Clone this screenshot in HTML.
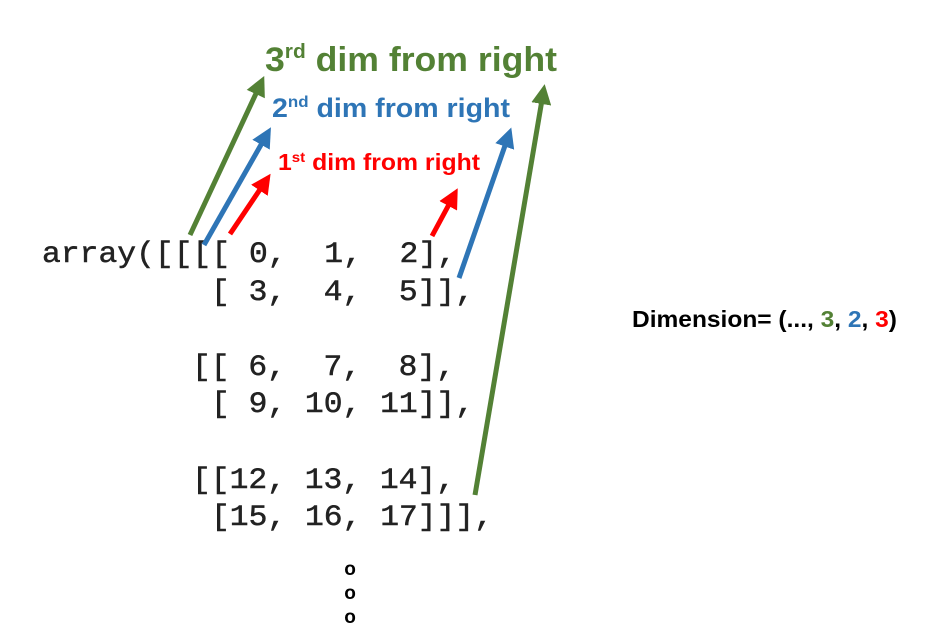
<!DOCTYPE html>
<html><head><meta charset="utf-8"><style>
html,body{margin:0;padding:0;background:#fff;width:925px;height:644px;overflow:hidden}
.m text{white-space:pre}
</style></head><body>
<svg width="925" height="644" viewBox="0 0 925 644" xmlns="http://www.w3.org/2000/svg">
<defs>
<marker id="mg" markerWidth="4" markerHeight="4" refX="2" refY="2" orient="auto" markerUnits="strokeWidth"><path d="M0,0 L4,2 L0,4 z" fill="#538135"/></marker>
<marker id="mb" markerWidth="4" markerHeight="4" refX="2" refY="2" orient="auto" markerUnits="strokeWidth"><path d="M0,0 L4,2 L0,4 z" fill="#2E75B6"/></marker>
<marker id="mr" markerWidth="4" markerHeight="4" refX="2" refY="2" orient="auto" markerUnits="strokeWidth"><path d="M0,0 L4,2 L0,4 z" fill="#FF0000"/></marker>
</defs>
<g class="m" font-family="Liberation Mono, monospace" font-size="30" fill="#222" stroke="#222" stroke-width="0.5">
<text x="42" y="262" textLength="414" lengthAdjust="spacingAndGlyphs">array([[[[ 0,  1,  2],</text>
<text x="211" y="300" textLength="263" lengthAdjust="spacingAndGlyphs">[ 3,  4,  5]],</text>
<text x="192" y="375" textLength="263" lengthAdjust="spacingAndGlyphs">[[ 6,  7,  8],</text>
<text x="211" y="412" textLength="263" lengthAdjust="spacingAndGlyphs">[ 9, 10, 11]],</text>
<text x="192" y="488" textLength="263" lengthAdjust="spacingAndGlyphs">[[12, 13, 14],</text>
<text x="211" y="525" textLength="282" lengthAdjust="spacingAndGlyphs">[15, 16, 17]]],</text>
</g>
<g font-family="Liberation Sans, sans-serif" font-weight="bold" font-size="19" fill="#000" text-anchor="middle">
<text x="350" y="575">o</text><text x="350" y="599">o</text><text x="350" y="623">o</text>
</g>
<g font-family="Liberation Sans, sans-serif" font-weight="bold">
<text x="265" y="71" font-size="34" fill="#538135" textLength="292" lengthAdjust="spacingAndGlyphs">3<tspan font-size="20" dy="-13">rd</tspan><tspan dy="13"> dim from right</tspan></text>
<text x="272" y="117" font-size="27" fill="#2E75B6" textLength="238" lengthAdjust="spacingAndGlyphs">2<tspan font-size="16" dy="-10">nd</tspan><tspan dy="10"> dim from right</tspan></text>
<text x="278" y="170" font-size="23" fill="#FF0000" textLength="202" lengthAdjust="spacingAndGlyphs">1<tspan font-size="14" dy="-8">st</tspan><tspan dy="8"> dim from right</tspan></text>
<text x="632" y="327" font-size="23" fill="#000" textLength="265" lengthAdjust="spacingAndGlyphs">Dimension= (..., <tspan fill="#538135">3</tspan>, <tspan fill="#2E75B6">2</tspan>, <tspan fill="#FF0000">3</tspan>)</text>
</g>
<g stroke-width="5" fill="none">
<line x1="190" y1="235" x2="260" y2="85" stroke="#538135" marker-end="url(#mg)"/>
<line x1="475" y1="495" x2="543" y2="94" stroke="#538135" marker-end="url(#mg)"/>
<line x1="204" y1="245" x2="266" y2="136" stroke="#2E75B6" marker-end="url(#mb)"/>
<line x1="459" y1="278" x2="508" y2="137" stroke="#2E75B6" marker-end="url(#mb)"/>
<line x1="230" y1="234" x2="265" y2="182" stroke="#FF0000" marker-end="url(#mr)"/>
<line x1="432" y1="236" x2="453" y2="197" stroke="#FF0000" marker-end="url(#mr)"/>
</g>
</svg>
</body></html>
